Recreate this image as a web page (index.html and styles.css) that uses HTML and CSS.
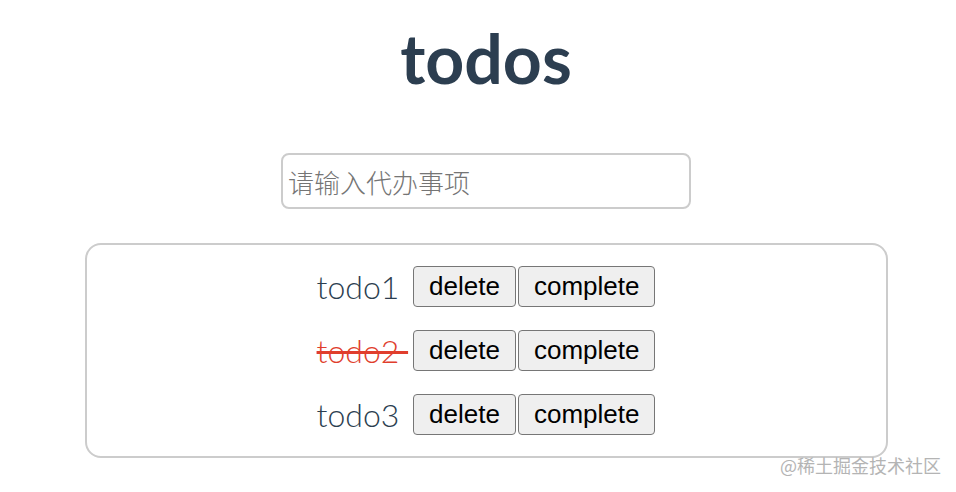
FILE: index.html
```html
<!DOCTYPE html>
<html lang="zh">
<head>
<meta charset="utf-8">
<title>todos</title>
<link rel="stylesheet" href="styles.css">
</head>
<body>
<div class="app">
  <h1 class="title">todos</h1>
  <input class="new-todo" type="text" placeholder="请输入代办事项">
  <ul class="todo-list">
    <li class="todo-item"><span class="todo-text">todo1 </span><button class="btn">delete</button><button class="btn">complete</button></li>
    <li class="todo-item"><span class="todo-text done">todo2 </span><button class="btn">delete</button><button class="btn">complete</button></li>
    <li class="todo-item"><span class="todo-text">todo3 </span><button class="btn">delete</button><button class="btn">complete</button></li>
  </ul>
</div>
<div class="watermark">@稀土掘金技术社区</div>
</body>
</html>
```
FILE: styles.css
```css
html, body {
  margin: 0;
  padding: 0;
  background: #ffffff;
}

body {
  font-family: "Lato", "Noto Sans", sans-serif;
  color: #2c3e50;
  position: relative;
  height: 492px;
  overflow: hidden;
}

.app {
  display: flex;
  flex-direction: column;
  align-items: center;
  padding-left: 16px;
}

.title {
  margin: 25px 0 0;
  font-size: 68px;
  line-height: 66px;
  font-weight: 700;
  color: #2c3e50;
}

.new-todo {
  margin-top: 62px;
  width: 410px;
  height: 56px;
  box-sizing: border-box;
  border: 2px solid #cccccc;
  border-radius: 8px;
  padding: 0 5px;
  font-family: "Noto Sans CJK SC", "Liberation Sans", sans-serif;
  font-size: 26px;
  font-weight: 300;
  color: #333;
  outline: none;
}

.new-todo::placeholder {
  color: #757575;
}

.todo-list {
  list-style: none;
  margin: 34px 0 0;
  width: 803px;
  box-sizing: border-box;
  border: 2px solid #cccccc;
  border-radius: 16px;
  padding: 21px 0;
  display: flex;
  flex-direction: column;
  gap: 23px;
}

.todo-item {
  display: flex;
  align-items: center;
  justify-content: center;
  gap: 2px;
}

.todo-text {
  font-size: 32px;
  font-weight: 300;
  white-space: pre;
  color: #2c3e50;
  margin-right: 3px;
}

.todo-text.done {
  color: #e03e2d;
  text-decoration: line-through;
}

.btn {
  height: 41px;
  box-sizing: border-box;
  margin: 0;
  padding: 0 15px;
  font-family: "Liberation Sans", Arial, sans-serif;
  font-size: 26px;
  color: #000;
  background: #efefef;
  border: 1px solid #767676;
  border-radius: 4px;
}

.watermark {
  position: absolute;
  left: 780px;
  top: 452px;
  font-family: "Noto Sans CJK SC", sans-serif;
  font-size: 18px;
  color: #b4b4b4;
  white-space: nowrap;
}
```
